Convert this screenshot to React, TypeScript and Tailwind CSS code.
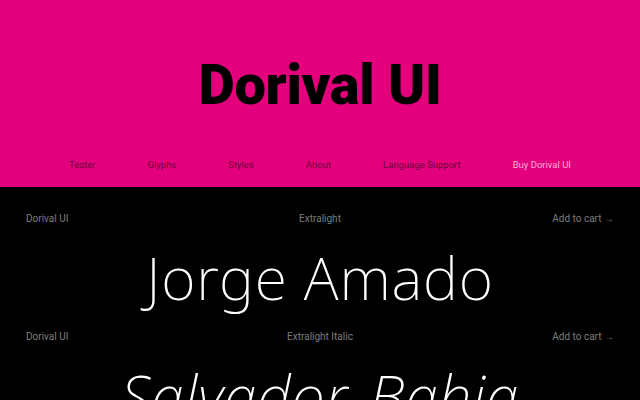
const NAV = ['Tester', 'Glyphs', 'Styles', 'About', 'Language Support'];

const STYLES = [
  { name: 'Extralight', sample: 'Jorge Amado', italic: false },
  { name: 'Extralight Italic', sample: 'Salvador, Bahia', italic: true },
];

function StyleBlock({ name, sample, italic }: { name: string; sample: string; italic: boolean }) {
  return (
    <section className="pt-[23px]">
      <div className="grid grid-cols-3 px-[26px] text-[10px] leading-[14px] text-[#7d7d7d] font-['Roboto',sans-serif]">
        <span>Dorival UI</span>
        <span className="text-center">{name}</span>
        <span className="text-right">Add to cart →</span>
      </div>
      <p
        className={`mt-[22px] text-center text-[59px] leading-[59px] tracking-[0.8px] font-extralight text-white font-['Noto_Sans','Inter',sans-serif] whitespace-nowrap ${
          italic ? 'italic' : ''
        }`}
      >
        {sample}
      </p>
    </section>
  );
}

export default function App() {
  return (
    <div className="w-[640px] h-[400px] overflow-hidden bg-black">
      {/* Header */}
      <header className="bg-[#e4007c] pt-[57px] pb-[15px]">
        <h1 className="text-center text-[56px] leading-[56px] font-black tracking-[-0.3px] text-black font-['Roboto',sans-serif]">
          Dorival UI
        </h1>
        <nav className="mt-[45px] flex justify-center gap-[52px] text-[9.5px] leading-[14px] font-['Roboto',sans-serif]">
          {NAV.map((item) => (
            <a key={item} className="text-black/60">
              {item}
            </a>
          ))}
          <a className="text-white/70">Buy Dorival UI</a>
        </nav>
      </header>

      {/* Styles list */}
      <main className="pt-[2px]">
        {STYLES.map((s) => (
          <StyleBlock key={s.name} {...s} />
        ))}
      </main>
    </div>
  );
}
